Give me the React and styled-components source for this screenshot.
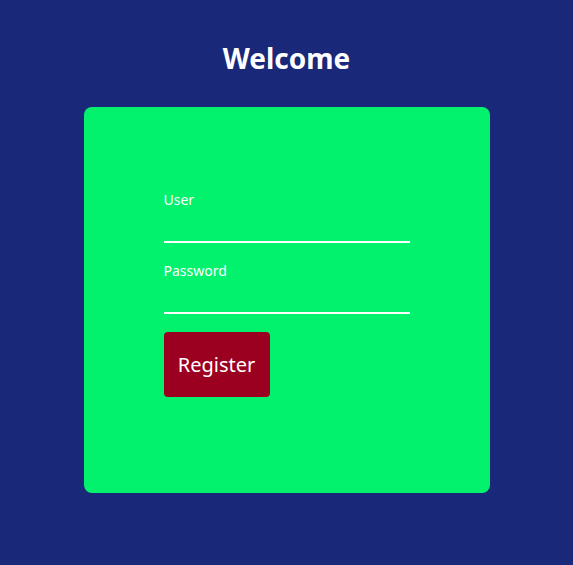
import React from "react";
import styled, {createGlobalStyle} from "styled-components";

const GlobalStyle = createGlobalStyle`
  body {
    margin: 0;
    background: #1a2879;
    font-family: "Noto Sans", "Open Sans", sans-serif;
  }
`;

const Page = styled.div`
  display: flex;
  flex-direction: column;
  align-items: center;
  min-height: 565px;
  padding-top: 38px;
  box-sizing: border-box;
`;

const Title = styled.h1`
  margin: 0 0 29px;
  font-size: 28px;
  line-height: 40px;
  font-weight: 700;
  color: #ffffff;
`;

const Card = styled.div`
  display: flex;
  flex-direction: column;
  gap: 18px;
  width: 406px;
  height: 386px;
  padding: 83px 80px 0;
  box-sizing: border-box;
  background: #03f26e;
  border-radius: 8px;
`;

const Field = styled.label`
  display: flex;
  flex-direction: column;
  width: 246px;
`;

const Label = styled.span`
  font-size: 14px;
  line-height: 20px;
  color: #ffffff;
`;

const Input = styled.input`
  height: 31px;
  padding: 0;
  border: none;
  border-bottom: 2px solid #ffffff;
  background: transparent;
  outline: none;
  color: #ffffff;
  font-size: 14px;
  font-family: inherit;
`;

const Button = styled.button`
  align-self: flex-start;
  width: 106px;
  height: 65px;
  border: none;
  border-radius: 4px;
  background: #9c0020;
  color: #ffffff;
  font-family: inherit;
  font-size: 20px;
  cursor: pointer;
`;

const App = () => (
  <>
    <GlobalStyle />
    <Page>
      <Title>Welcome</Title>
      <Card>
        <Field>
          <Label>User</Label>
          <Input type="text" />
        </Field>
        <Field>
          <Label>Password</Label>
          <Input type="password" />
        </Field>
        <Button>Register</Button>
      </Card>
    </Page>
  </>
);

export default App;
